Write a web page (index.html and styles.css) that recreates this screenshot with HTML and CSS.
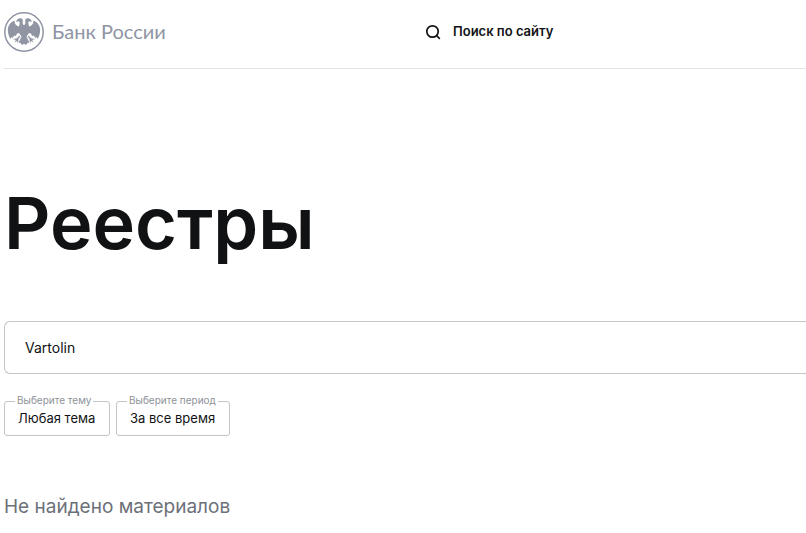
FILE: index.html
```html
<!DOCTYPE html>
<html lang="ru">
<head>
  <meta charset="UTF-8">
  <meta name="viewport" content="width=device-width, initial-scale=1.0">
  <title>Реестры | Банк России</title>
  <link rel="stylesheet" href="styles.css">
</head>
<body>
  <header class="header">
    <a class="logo" href="#">
      <svg class="logo-emblem" width="40" height="40" viewBox="0 0 40 40" aria-hidden="true">
        <circle cx="20" cy="20" r="19.200" fill="#fff" stroke="#8f95a3" stroke-width="1.500"/>
        <g fill="#8f95a3">
          <!-- wings -->
          <path d="M10.500 8.500C6.500 10 4 13.500 3.800 18C4 22 5 25 6.500 27L7.500 25L9 26L10 23.500L12 24L13 21.500L16 21L16.500 14.500C13 14.500 10.500 12.500 10.500 8.500Z"/>
          <path d="M29.500 8.500C33.500 10 36 13.500 36.200 18C36 22 35 25 33.500 27L32.500 25L31 26L30 23.500L28 24L27 21.500L24 21L23.500 14.500C27 14.500 29.500 12.500 29.500 8.500Z"/>
          <!-- heads -->
          <path d="M12.300 10C12.300 7.500 14.500 5.800 17 6.200C18.500 6.500 19 7.800 18.700 9.200L18.600 11.500L20 13.500L21.400 11.500L21.300 9.200C21 7.800 21.500 6.500 23 6.200C25.500 5.800 27.700 7.500 27.700 10L25.200 9.300L24.200 10.500L25 15L15 15L15.800 10.500L14.800 9.300Z"/>
          <!-- body and tail -->
          <path d="M15 14L25 14L25.500 18C25 21 24 23 22.500 25L25.500 30.500L23.500 31L22 33L20 31.800L18 33L16.500 31L14.500 30.500L17.500 25C16 23 15 21 14.500 18Z"/>
          <!-- claws -->
          <path d="M15.500 23.500L12.500 26.500L9 27L11.800 28L10.500 30.200L13 29L13.800 31L14.500 28L17 25Z"/>
          <path d="M24.500 23.500L27.500 26.500L31 27L28.200 28L29.500 30.200L27 29L26.200 31L25.500 28L23 25Z"/>
        </g>
        <path d="M14.500 21.500L16.800 24L14.500 27.500M25.500 21.500L23.200 24L25.500 27.500" fill="none" stroke="#fff" stroke-width="1"/>
      </svg>
      <span class="logo-text">Банк России</span>
    </a>
    <a class="site-search" href="#">
      <svg width="16" height="16" viewBox="0 0 16 16" fill="none" stroke="#111214" stroke-width="1.700" aria-hidden="true">
        <circle cx="7.500" cy="7.500" r="5.700"/>
        <path d="M11.500 11.500L14.800 14.800"/>
      </svg>
      <span>Поиск по сайту</span>
    </a>
  </header>

  <main class="content">
    <h1 class="title">Реестры</h1>
    <form class="filter">
      <input class="filter-input" type="text" value="Vartolin" aria-label="Поиск">
      <div class="filter-row">
        <div class="field">
          <label class="field-label" for="theme">Выберите тему</label>
          <select class="field-select" id="theme">
            <option>Любая тема</option>
          </select>
        </div>
        <div class="field">
          <label class="field-label" for="period">Выберите период</label>
          <select class="field-select" id="period">
            <option>За все время</option>
          </select>
        </div>
      </div>
    </form>
    <p class="empty">Не найдено материалов</p>
  </main>
</body>
</html>
```
FILE: styles.css
```css
* {
  box-sizing: border-box;
}

body {
  margin: 0;
  padding-left: 4px;
  font-family: Inter, "Liberation Sans", sans-serif;
  font-size: 13px;
  color: #111214;
  background: #fff;
}

.header {
  display: grid;
  grid-template-columns: 21fr 19fr;
  align-items: center;
  padding: 12px 0 16px;
  border-bottom: 1px solid #e3e4e6;
}

.logo {
  display: flex;
  align-items: center;
  gap: 8px;
  color: #8f95a3;
  text-decoration: none;
}

.logo-emblem {
  flex: none;
}

.logo-text {
  padding-bottom: 2px;
  font-family: Lato, sans-serif;
  font-size: 20px;
  line-height: 24px;
}

.site-search {
  display: flex;
  align-items: center;
  gap: 12px;
  color: #111214;
  font-weight: 600;
  line-height: 16px;
  text-decoration: none;
}

.site-search span {
  padding-bottom: 2px;
}

.title {
  margin: 108px 0 52px;
  font-size: 72px;
  font-weight: 600;
  line-height: 92px;
}

.filter-input {
  display: block;
  width: 100%;
  height: 53px;
  padding: 0 20px;
  border: 1px solid #c4c5c8;
  border-right: none;
  border-radius: 6px 0 0 6px;
  background: #fff;
  color: #111214;
  font: inherit;
  font-size: 14px;
}

.filter-row {
  display: flex;
  gap: 6px;
  margin-top: 27px;
}

.field {
  position: relative;
}

/* the label sits on the top border of the field */
.field-label {
  position: absolute;
  top: -7px;
  left: 11px;
  padding: 0 2px;
  background: #fff;
  color: #8e9299;
  font-size: 10px;
  line-height: 12px;
  white-space: nowrap;
}

.field-select {
  display: block;
  height: 35px;
  padding: 0 13px 2px;
  border: 1px solid #c4c5c8;
  border-radius: 3px;
  appearance: none;
  background: #fff;
  color: #111214;
  font: inherit;
}

.empty {
  margin: 58px 0 0;
  color: #6c7078;
  font-size: 19px;
  line-height: 26px;
}
```
